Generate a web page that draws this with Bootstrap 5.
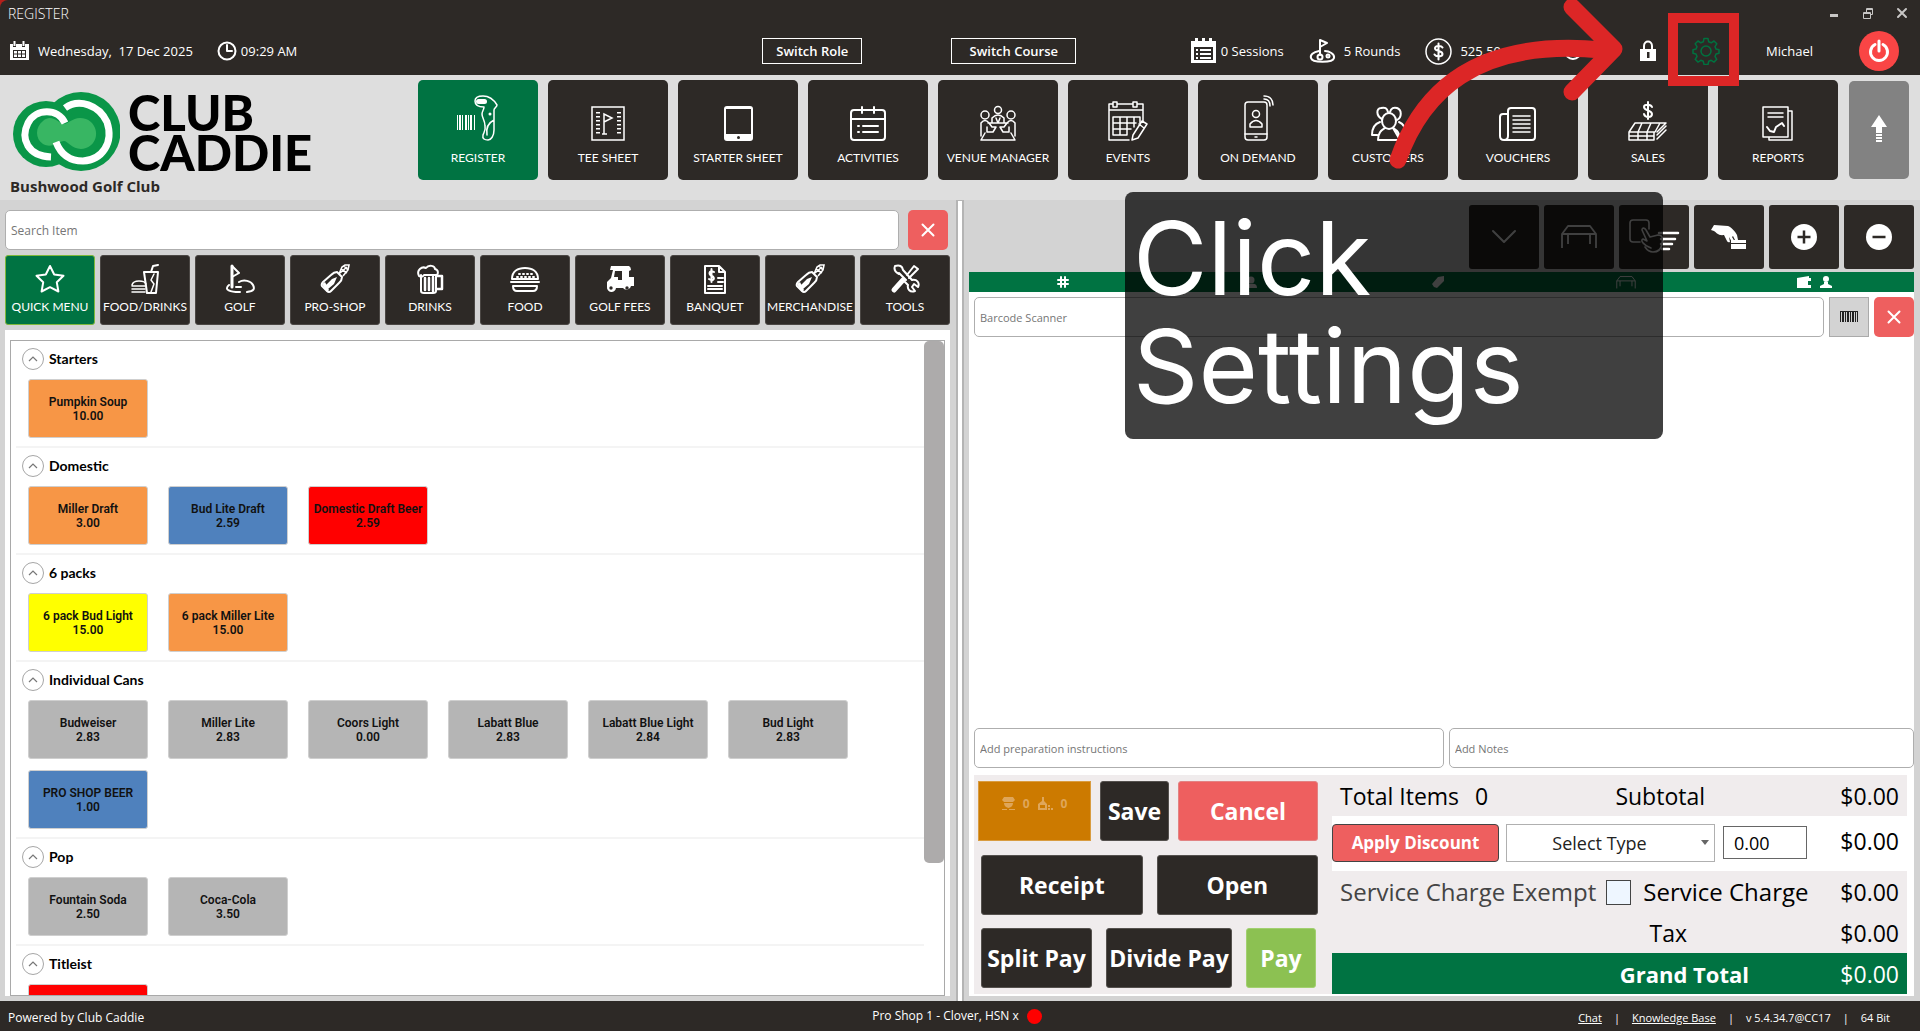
<!DOCTYPE html>
<html lang="en">
<head>
<meta charset="utf-8">
<meta name="viewport" content="width=device-width, initial-scale=1">
<title>Register</title>
<link href="https://cdn.jsdelivr.net/npm/bootstrap@5.3.0/dist/css/bootstrap.min.css" rel="stylesheet">
<style>
:root{--ink:#2d2926;--green:#007342;--coral:#ee5f5f;--ui:"Open Sans","Noto Sans",sans-serif;--cap:Lato,"Open Sans",sans-serif}
body{font-family:var(--ui);font-size:14px;line-height:20px;color:#000;background:#b3201c}
button{white-space:nowrap}
svg{display:block;flex:none}
.ln{fill:none;stroke:currentColor;stroke-width:2;stroke-linecap:round;stroke-linejoin:round}
.thin{stroke-width:1.5}
.topbar{background:var(--ink);color:#fff;height:75px;border-top-left-radius:8px}
.title-row{height:27px;padding:4px 12px 0 8px}
.info-row{height:48px;padding:0 21px 0 9px;font-size:13px}
.app-title{font-weight:300;line-height:20px}
.win-btns{gap:22px;color:#c8c6c5}
.plain{background:none;border:0;padding:0;color:inherit;line-height:20px}
.switches{gap:89px;margin-left:465px}
.switches button{width:100px;height:26px;border:1px solid #fff;background:none;color:#fff;font-weight:600;padding:0}
.switches .wide{width:125px}
.stats{gap:25px}
.user-tools{gap:35px;margin-left:56px}
.who{margin:0 46px}
.busy{margin-left:62px}
.power{width:40px;height:40px;border-radius:50%;background:#f94545;color:#fff}
.head{background:#dedede;height:125px;padding:5px 11px 0 10px}
.brand-words{font:900 49px/40px var(--cap);color:#000}
.club{font-weight:700;font-size:15px;color:var(--ink)}
.nav-tiles{gap:10px;width:1420px}
.nav-tile{flex:1 1 0;height:100px;background:var(--ink);color:#fff;border:0;border-radius:5px;padding:0 0 13px;font:400 12px/18px var(--cap)}
.nav-tile svg{margin-bottom:8px}
.tile-on{background:var(--green)}
.up-tile{flex:0 0 60px;height:98px;background:#828282;margin:1px 0 0 11px;padding-bottom:0}
.work{background:#d3d3d3;min-height:0}
.pane{flex:1 1 0;min-width:0}
.pane-left{padding:10px 6px 5px 5px}
.pane-right{padding:5px 6px 5px 5px}
.split-bar{width:8px;background:#fff;border:solid #b4b4b4;border-width:1px 2px 0}
.field{height:40px;border:1px solid #aeaeae;border-radius:5px;font-size:12px;padding:0 5px;background:#fff;min-width:0}
.field::placeholder{color:#767676;opacity:1}
.field-sm{font-size:11px}
.w-prep{flex:470 1 0}.w-notes{flex:465 1 0}
.sq{width:40px;height:40px;border:0;border-radius:5px;background:var(--coral);color:#fff;flex:none}
.scan{background:#d3d3d3;border:1px solid #aaa;border-radius:0;color:#222}
.find-row{gap:9px;padding-right:2px}
.cats{gap:5px;margin:5px 0}
.cat{flex:1 1 0;min-width:0;height:70px;background:var(--ink);color:#fff;border:1px solid #4b4744;border-radius:3px;padding:0 0 1px;font:400 12px/18px var(--cap)}
.cat svg{margin-bottom:4px}
.cat-on{background:var(--green);border-color:#7fb83a}
.list-wrap{background:#fff;padding:10px 5px 0;min-height:0}
.list-box{border:1px solid #a9a9a9;overflow:hidden}
.sect{padding:7px 0 8px 2px;border-bottom:2px solid #f4f4f4}
.sect-scroll{padding-left:5px}
.sect h2{font:700 14px/22px var(--cap);margin:0}
.fold{width:22px;height:22px;border:1px solid #a6a6a6;border-radius:50%;background:#fff;color:#777;margin-left:4px;margin-right:5px}
.items{gap:11px 20px;padding:9px 0 0 10px}
.item{width:120px;height:59px;border:1px solid #cfcfcf;border-radius:3px;font:600 12px/14px Roboto,sans-serif;color:#111;padding:0}
.c-or{background:#f79646}.c-bl{background:#4f81bd}.c-rd{background:#f00}.c-ye{background:#ff0}.c-gr{background:#b5b5b5}
.thumb{width:20px;height:522px;background:#adabab;border-radius:5px}
.tools{gap:5px;height:64px}
.tool{width:70px;background:var(--ink);border:0;border-radius:3px;color:#fff;padding:0}
.cols{background:var(--green);height:20px;color:#fff;margin-top:3px;padding-right:6px}
.entry{gap:5px;padding-left:5px}
.scan-row{margin-top:5px}
.order{background:#f0eced;margin:7px 7px 2px 5px}
.keys{flex:0 0 358px;padding:6px 14px 6px 7px}
.keys button{height:60px;border:1px solid #55514e;border-radius:3px;background:var(--ink);color:#fff;font-weight:700;font-size:23px;padding:0}
.keys .k-orange{flex:0 0 113px;margin-left:-3px;background:#cc7a00;border-color:#d99c40;border-radius:0;color:#dfa65a;font-size:12px;padding-bottom:14px}
.keys .k-coral{background:var(--coral);border-color:#e28383}
.keys .k-lime{background:#8cc152;border-color:#a2d070}
.k-w69{flex:0 0 69px}.k-w111{flex:0 0 111px}.k-w126{flex:0 0 126px}.k-w70{flex:0 0 70px}
.g9{gap:9px}.g14{gap:14px}
.sums{font-size:23px;line-height:40px;white-space:nowrap;min-width:0}
.sums .r1{height:41px}.sums .r2{height:55px;background:#fff;padding-bottom:2px}.sums .r3{height:42px}.sums .r4{height:40px}.sums .r5{height:41px;background:var(--green);color:#fff}
.svc{font-size:24px}
.svc-note{color:#444}
.amt{width:90px;text-align:right;padding-right:8px}
.lab-sub{margin-right:112px}.lab-tax{margin-right:130px}.lab-grand{margin-right:68px;font-size:22px}
.disc{width:167px;height:38px;background:var(--coral);color:#fff;font-weight:700;font-size:17px;line-height:30px;border:1px solid #444;border-radius:4px;padding:0}
.type-wrap{width:209px;margin:0 8px 0 7px}
.type-wrap select{display:block;appearance:none;width:100%;height:38px;border:1px solid #b0b0b0;background:#fff;font-size:18px;line-height:30px;text-align:center;text-align-last:center;padding:0 22px 0 0;color:#222}
.type-wrap svg{right:6px;top:16px}
.val{width:84px;height:33px;border:1px solid #666;font-size:18px;padding:0 0 0 10px}
.exempt{width:25px;height:25px;margin:0 12px 0 10px;appearance:none;background:#eef6ff;border:1px solid #444}
.foot{background:var(--ink);color:#fff;height:30px;font-size:12px;padding:0 30px 0 8px}
.foot a{color:#fff}
.foot-side{padding-top:3px}
.foot-mid{gap:8px;padding-left:16px}
.foot-links{gap:12px;font-size:11px}
.foot .dot{width:15px;height:15px;border-radius:50%;background:#f00}
.note{left:1125px;top:192px;width:538px;height:247px;border-radius:8px;background:rgba(0,0,0,.75);color:#fff;font:400 102px/108px Inter,sans-serif;padding:12px 10px 0 8px}
.pointer{left:1360px;top:0;pointer-events:none}
</style>
<script src="https://cdn.jsdelivr.net/npm/bootstrap@5.3.0/dist/js/bootstrap.bundle.min.js"></script>
</head>
<body>
<svg class="d-none" aria-hidden="true">
<symbol id="bottle" viewBox="0 0 30 30"><path fill="none" stroke="currentColor" stroke-width="2" stroke-linejoin="round" d="M17 8l5 5c0 4-2 5-4 7l-7 7q-2 2-4 0l-5-5q-1-2 1-4l8-7c2-2 3-3 6-3z"/><path fill="currentColor" d="M12 15l5-2-3 7-6 5-3-3zM2 20l3-2 4 8-2 2z"/><path fill="none" stroke="currentColor" stroke-width="1.6" d="M19 10l3-7 3-2 4 0-1 5-5 6M21 5l6 4M24 2l4 4M20 9l7-6"/></symbol>
<symbol id="x" viewBox="0 0 14 14"><path fill="none" stroke="currentColor" stroke-width="2" stroke-linecap="round" d="M1.500 1.500l11 11m0-11l-11 11"/></symbol>
<symbol id="up" viewBox="0 0 10 6"><path fill="none" stroke="currentColor" stroke-width="1.200" d="M1 5l4-4 4 4"/></symbol>
<symbol id="tbl" viewBox="0 0 36 24"><path fill="none" stroke="currentColor" stroke-width="1.800" stroke-linejoin="round" d="M7 1h22l6 8H1zM1 9v14M35 9v14M7 9v10M29 9v10M1 6"/></symbol>
</svg>
<div class="vh-100 d-flex flex-column overflow-hidden position-relative">
<header class="topbar flex-shrink-0">
 <div class="title-row d-flex justify-content-between align-items-start">
  <span class="app-title">REGISTER</span>
  <div class="win-btns d-flex">
   <button class="plain" aria-label="Minimize"><svg width="12" height="18"><path fill="currentColor" d="M2 10h8v3H2z"/></svg></button>
   <button class="plain" aria-label="Restore"><svg width="12" height="18" fill="none" stroke="currentColor"><path d="M1.500 8.500h7v6h-7zM1.500 9.500h7M4.500 8V4.500h6v6H9M4.500 5.500h6"/></svg></button>
   <button class="plain" aria-label="Close"><svg width="12" height="18" class="ln"><path d="M2 5l8 8m0-8l-8 8"/></svg></button>
  </div>
 </div>
 <div class="info-row d-flex align-items-center">
  <svg width="21" height="20"><path fill="currentColor" d="M1 3h3v3h3V3h6v3h3V3h4v16H1z"/><path stroke="currentColor" stroke-width="2" d="M5.500 0v5M14.500 0v5"/><path fill="#2d2926" d="M4 9h13v8H4z"/><path fill="currentColor" d="M5 10h3v2.500H5zM9 10h3v2.500H9zM13 10h3v2.500h-3zM5 13.500h3V16H5zM9 13.500h3V16H9zM13 13.500h3V16h-3z"/></svg>
  <span class="ms-2">Wednesday,&nbsp; 17 Dec 2025</span>
  <svg width="20" height="20" class="ln ms-4 me-1"><circle cx="10" cy="10" r="8.500"/><path d="M10 4v6h5"/></svg>
  <span>09:29 AM</span>
  <div class="switches d-flex"><button>Switch Role</button><button class="wide">Switch Course</button></div>
  <div class="stats d-flex align-items-center ms-auto">
   <span class="d-flex align-items-center"><svg width="27" height="26" class="me-1"><path fill="currentColor" d="M1 3h4V0h3v3h4V0h3v3h4V0h3v3h4v22H1z"/><path fill="#2d2926" d="M4 9h19v13H4z"/><path stroke="currentColor" stroke-width="2" d="M6 12h2M10 12h11M6 16h2M10 16h11M6 20h2M10 20h11"/></svg>0 Sessions</span>
   <span class="d-flex align-items-center"><svg width="27" height="26" class="ln me-2"><path d="M11 17V2l7 3-7 4"/><path d="M10 13C4 14 1 17 2 20c1 5 22 5 23 0 1-4-5-7-9-7"/><circle cx="11" cy="19" r="2.500"/><circle cx="19" cy="18" r="1.500"/></svg>5 Rounds</span>
   <span class="d-flex align-items-center"><svg width="27" height="27" class="ln thin me-2"><circle cx="13.500" cy="13.500" r="12.500"/><path stroke-width="2" d="M17.500 9.500c-1-2-7.500-2.500-7.500.8 0 3.500 7.500 2 7.500 5.700 0 3-6.500 3.300-8 .5M13.500 5.500v16"/></svg>525.50</span>
  </div>
  <svg width="20" height="20" class="ln busy"><circle cx="10" cy="10" r="8"/></svg>
  <div class="user-tools d-flex align-items-center">
   <button class="plain" aria-label="Lock"><svg width="18" height="22"><path class="ln" d="M5 10V6c0-6 8-6 8 0v4" stroke-width="3"/><path fill="currentColor" d="M1 9h16v12H1z"/><path fill="#2d2926" d="M8 12h2.500v6H8z"/></svg></button>
   <button class="plain" aria-label="Settings"><svg width="28" height="28" viewBox="0 0 28 28" fill="none" stroke="#00713f" stroke-width="1.500" stroke-linejoin="round"><circle cx="14" cy="14" r="5"/><path d="M12 1.500h4l.7 3.300 2.500 1 2.800-1.800 2.800 2.800-1.800 2.800 1 2.500 3 .6v3.600l-3 .7-1 2.500 1.800 2.800-2.800 2.800-2.800-1.800-2.500 1-.7 3.200h-4l-.7-3.200-2.500-1L6 25.100l-2.800-2.800L5 19.500 4 17l-3-.7v-3.600l3-.6 1-2.500-1.800-2.800L6 4l2.800 1.800 2.500-1z"/></svg></button>
  </div>
  <span class="who">Michael</span>
  <button class="power border-0 p-0 d-flex align-items-center justify-content-center" aria-label="Log out"><svg width="22" height="24" fill="none" stroke="currentColor" stroke-width="3" stroke-linecap="round"><path d="M7 5.500a8.500 8.500 0 1 0 8 0M11 2v10"/></svg></button>
 </div>
</header>
<section class="head d-flex justify-content-between flex-shrink-0">
 <div>
  <div class="d-flex align-items-center pt-2">
   <svg width="110" height="88" viewBox="10 87 110 88"><g fill="#0a9648"><circle cx="81" cy="130.500" r="39.500"/><circle cx="46" cy="133" r="33"/></g><path d="M43 120c9-8 16 3 21 3s10-9 22-5c13 5 14 24 0 29-12 4-18-7-22-7-5 0-12 8-21 3-8-5-8-17 0-23z" fill="#38b663"/><path d="M65 122c-7-15-29-15-37 0-8 16 0 33 23 34" fill="none" stroke="#fff" stroke-width="7"/><path d="M65 107c14-10 34-3 42 14 7 21-5 38-24 39-13 0-22-6-27-19" fill="none" stroke="#fff" stroke-width="7"/></svg>
   <div class="brand-words ms-2">CLUB<br>CADDIE</div>
  </div>
  <div class="club">Bushwood Golf Club</div>
 </div>
 <nav class="d-flex">
  <div class="nav-tiles d-flex">
  <button class="nav-tile tile-on d-flex flex-column align-items-center justify-content-end"><svg width="46" height="46"><path fill="currentColor" d="M2 20h1v15H2zM4 20h2v15H4zM7 20h1v15H7zM10 20h2v15h-2zM13 20h1v15h-1zM15 20h2v15h-2zM19 20h1v15h-1z"/><rect x="21" y="4" width="11" height="5" rx="2.500" fill="currentColor"/><path class="ln thin" d="M20 6c0-4 4-5 8-5 6 0 11 4 14 9 0 2-3 3-3 5v20c0 6-3 10-6 10s-6-1-5-5c1-3 3-5 2-9 0-6-3-8-3-12 0-3 2-4 2-7-4 0-9-1-9-6zM39 25c-6 3-8 9-7 15"/><circle cx="35" cy="19" r="1.500" fill="currentColor"/></svg>REGISTER</button>
  <button class="nav-tile d-flex flex-column align-items-center justify-content-end"><svg width="46" height="46" fill="none" stroke="currentColor" stroke-width="1.500"><path d="M7 12h32v33H7z"/><path stroke-dasharray="1.500 2.500" stroke-width="4" d="M13 17v24M34 17v24"/><path d="M19 39V19l8 4-8 4M17 39h5"/></svg>TEE SHEET</button>
  <button class="nav-tile d-flex flex-column align-items-center justify-content-end"><svg width="46" height="46"><rect x="9" y="11" width="29" height="35" rx="3" fill="currentColor"/><path fill="#2d2926" d="M11 14h25v25H11z"/><circle cx="23.500" cy="42.500" r="1.500" fill="#2d2926"/></svg>STARTER SHEET</button>
  <button class="nav-tile d-flex flex-column align-items-center justify-content-end"><svg width="46" height="46" class="ln"><rect x="6" y="15" width="34" height="30" rx="3"/><path d="M6 24h34M17 12v6M29 12v6M13 31h1M18 31h15M13 37h1M18 37h15"/></svg>ACTIVITIES</button>
  <button class="nav-tile d-flex flex-column align-items-center justify-content-end"><svg width="46" height="46" class="ln thin"><circle cx="23" cy="15" r="3.500"/><circle cx="10" cy="20" r="4"/><circle cx="36" cy="20" r="4"/><path d="M17 28v-5q6-6 12 0v5M21 23l2 5 2-5M13 28h20M6 41V28q4-5 8 0l3 4h4l-3 5h-6v-5M40 41V28q-4-5-8 0l-3 4h-4l3 5h6v-5M10 38l-4 7h34l-4-7"/></svg>VENUE MANAGER</button>
  <button class="nav-tile d-flex flex-column align-items-center justify-content-end"><svg width="46" height="46" class="ln thin"><path d="M24 45H4V9h4M12 9h16M33 9h5v18M4 15h34M8 7h4v5H8zM28 7h4v5h-4zM8 22h27v6M8 22v18h14M8 28h23M8 34h18M15 22v18M22 22v18M29 22v10"/><path d="M28 40l9-14 5 3-9 14-6 2zM34 29l5 4"/></svg>EVENTS</button>
  <button class="nav-tile d-flex flex-column align-items-center justify-content-end"><svg width="46" height="46" class="ln thin"><rect x="10" y="7" width="22" height="38" rx="3"/><path d="M10 39h22M20 42h2M29 4c4 0 6 3 6 7M29 1c6 0 9 4 9 9"/><circle cx="21" cy="19" r="3.500"/><path d="M15 32v-3q6-7 12 0v3z"/></svg>ON DEMAND</button>
  <button class="nav-tile d-flex flex-column align-items-center justify-content-end"><svg width="46" height="46" class="ln"><ellipse cx="24" cy="26" rx="7" ry="8"/><path d="M13 45c0-8 4-10 7-12M28 33c3 2 7 4 7 12zM17 24c-6-3-6-11-1-11 4-1 6 0 7 4M25 17c1-4 4-5 7-4 5 2 5 9 0 12M15 27c-6 2-8 6-8 13h5M34 27c5 2 7 6 7 13h-5M13 45h22"/></svg>CUSTOMERS</button>
  <button class="nav-tile d-flex flex-column align-items-center justify-content-end"><svg width="46" height="46" class="ln"><path d="M13 41V16q0-3 3-3h21q3 0 3 3v26q0 3-3 3H9q-4 0-4-4V22q0-3 3-3h5M13 41q0 4-4 4"/><path class="thin" d="M18 21h17M18 25h17M18 29h17M18 33h17M18 37h17"/></svg>VOUCHERS</button>
  <button class="nav-tile d-flex flex-column align-items-center justify-content-end"><svg width="46" height="46" class="ln thin"><path stroke-width="2" d="M27 12c-1-3-8-3-8 0 0 4 8 3 8 7 0 4-7 4-8 0M23 7v17"/><path d="M10 28h25l-5 9H4zM4 37v8h25v-8M4 41h25M35 28h6l-9 9M41 31l-9 9M41 35l-9 9M17 28l-4 9v8M26 28l-4 9v8"/></svg>SALES</button>
  <button class="nav-tile d-flex flex-column align-items-center justify-content-end"><svg width="46" height="46" class="ln thin"><path d="M8 12h25v30H8zM34 16h3v29H14v-3M13 18h15M13 22h15"/><path stroke-width="2" d="M12 32l3 4 4 1 2-5 6-4 2 3"/></svg>REPORTS</button>
  </div>
  <button class="nav-tile up-tile d-flex align-items-center justify-content-center" aria-label="Scroll up"><svg width="18" height="30" class="mb-0"><path fill="currentColor" d="M9 0l8 12h-5v6H6v-6H1zM6 19h6v2H6zM6 22h6v2H6zM6 25h6v2H6z"/></svg></button>
 </nav>
</section>
<main class="work d-flex flex-grow-1">
 <section class="pane pane-left d-flex flex-column">
  <div class="find-row d-flex"><input class="field flex-grow-1" placeholder="Search Item" aria-label="Search Item"><button class="sq d-flex align-items-center justify-content-center" aria-label="Clear search"><svg width="14" height="14"><use href="#x"/></svg></button></div>
  <div class="cats d-flex">
   <button class="cat cat-on d-flex flex-column align-items-center justify-content-center"><svg width="30" height="30" class="ln"><path d="M15 2l4.200 8.500 9.300 1.300-6.700 6.500 1.600 9.200L15 23.200l-8.400 4.300 1.600-9.200-6.700-6.500 9.300-1.300z"/></svg>QUICK MENU</button>
   <button class="cat d-flex flex-column align-items-center justify-content-center"><svg width="30" height="30" class="ln thin"><path stroke-width="2" d="M14 8h14l-2 21h-9zM21 8l2-6 5-1"/><path d="M24 10l-3 6 3 4-3 8M2 21q1-4 7-4t7 3M2 22h13M2 25h13M2 28h13"/></svg>FOOD/DRINKS</button>
   <button class="cat d-flex flex-column align-items-center justify-content-center"><svg width="30" height="30" class="ln"><path stroke-width="3" d="M7 23V2"/><path d="M7 2l7 7-7 4M4 21c-6 5 2 7 10 7M14 18c5-3 12-1 14 3 2 4 1 6-6 7M11 23h5M12 28h3"/></svg>GOLF</button>
   <button class="cat d-flex flex-column align-items-center justify-content-center"><svg width="30" height="30"><use href="#bottle"/></svg>PRO-SHOP</button>
   <button class="cat d-flex flex-column align-items-center justify-content-center"><svg width="30" height="30" class="ln"><path d="M6 11v16q0 2 3 2h9q3 0 3-2V11"/><path d="M4 12C1 6 7 2 11 4c3-4 9-2 9 1 4 1 3 5 2 6H9q-2 3-5 1z"/><path stroke-width="2.500" d="M10 14v12M14 14v12M18 13v14M22 12h5v13h-5"/></svg>DRINKS</button>
   <button class="cat d-flex flex-column align-items-center justify-content-center"><svg width="30" height="30" class="ln"><path d="M2 15C2 7 8 4 15 4s13 3 13 11zM1 18h28M3 22h24q0 5-4 5H7q-4 0-4-5z"/><path stroke-dasharray="1 3" d="M9 10h14M7 13h17"/></svg>FOOD</button>
   <button class="cat d-flex flex-column align-items-center justify-content-center"><svg width="30" height="30"><path fill="currentColor" d="M6 2h18q2 1 2 4l-2 1v6h5v9h-3a4.500 4.500 0 0 1-8 2h-7a4.500 4.500 0 0 1-9-1v-5l4-4 2-8H5zm4 5l-1 6h4v3h4V7z"/><circle cx="6" cy="24" r="1.700" fill="#2d2926"/><circle cx="22" cy="24" r="1.700" fill="#2d2926"/></svg>GOLF FEES</button>
   <button class="cat d-flex flex-column align-items-center justify-content-center"><svg width="30" height="30" class="ln"><path d="M5 2h14l6 6v21H5zM19 2v6h6M18 14h5M18 18h5M8 22h14M8 25h14"/><path d="M14 8c-5-3-6 3-2 4 4 2 1 6-3 3M11.500 5v13"/></svg>BANQUET</button>
   <button class="cat d-flex flex-column align-items-center justify-content-center"><svg width="30" height="30"><use href="#bottle"/></svg>MERCHANDISE</button>
   <button class="cat d-flex flex-column align-items-center justify-content-center"><svg width="30" height="30" class="ln"><path d="M9 9l7 7M17 11l7-9 4 3-9 9M9 10q-6-3-4-8 7-2 8 4l9 10c5-1 8 3 6 7l-4-3-2 3 3 4c-5 2-8-2-7-6l-5-5"/><path stroke-width="5" d="M13 16L4 26"/></svg>TOOLS</button>
  </div>
  <div class="list-wrap flex-grow-1 d-flex">
   <div class="list-box flex-grow-1 d-flex">
    <div class="sect-scroll flex-grow-1">
     <section class="sect"><div class="d-flex"><button class="fold p-0 d-flex align-items-center justify-content-center" aria-label="Collapse"><svg width="10" height="6"><use href="#up"/></svg></button><h2>Starters</h2></div>
      <div class="items d-flex flex-wrap"><button class="item c-or">Pumpkin Soup<br>10.00</button></div></section>
     <section class="sect"><div class="d-flex"><button class="fold p-0 d-flex align-items-center justify-content-center" aria-label="Collapse"><svg width="10" height="6"><use href="#up"/></svg></button><h2>Domestic</h2></div>
      <div class="items d-flex flex-wrap"><button class="item c-or">Miller Draft<br>3.00</button><button class="item c-bl">Bud Lite Draft<br>2.59</button><button class="item c-rd">Domestic Draft Beer<br>2.59</button></div></section>
     <section class="sect"><div class="d-flex"><button class="fold p-0 d-flex align-items-center justify-content-center" aria-label="Collapse"><svg width="10" height="6"><use href="#up"/></svg></button><h2>6 packs</h2></div>
      <div class="items d-flex flex-wrap"><button class="item c-ye">6 pack Bud Light<br>15.00</button><button class="item c-or">6 pack Miller Lite<br>15.00</button></div></section>
     <section class="sect"><div class="d-flex"><button class="fold p-0 d-flex align-items-center justify-content-center" aria-label="Collapse"><svg width="10" height="6"><use href="#up"/></svg></button><h2>Individual Cans</h2></div>
      <div class="items d-flex flex-wrap"><button class="item c-gr">Budweiser<br>2.83</button><button class="item c-gr">Miller Lite<br>2.83</button><button class="item c-gr">Coors Light<br>0.00</button><button class="item c-gr">Labatt Blue<br>2.83</button><button class="item c-gr">Labatt Blue Light<br>2.84</button><button class="item c-gr">Bud Light<br>2.83</button><button class="item c-bl">PRO SHOP BEER<br>1.00</button></div></section>
     <section class="sect"><div class="d-flex"><button class="fold p-0 d-flex align-items-center justify-content-center" aria-label="Collapse"><svg width="10" height="6"><use href="#up"/></svg></button><h2>Pop</h2></div>
      <div class="items d-flex flex-wrap"><button class="item c-gr">Fountain Soda<br>2.50</button><button class="item c-gr">Coca-Cola<br>3.50</button></div></section>
     <section class="sect"><div class="d-flex"><button class="fold p-0 d-flex align-items-center justify-content-center" aria-label="Collapse"><svg width="10" height="6"><use href="#up"/></svg></button><h2>Titleist</h2></div>
      <div class="items d-flex flex-wrap"><button class="item c-rd" aria-label="Titleist item"></button></div></section>
    </div>
    <div class="thumb flex-shrink-0"></div>
   </div>
  </div>
 </section>
 <div class="split-bar flex-shrink-0"></div>
 <section class="pane pane-right d-flex flex-column">
  <div class="tools d-flex justify-content-end flex-shrink-0">
   <button class="tool d-flex align-items-center justify-content-center" aria-label="Expand"><svg width="26" height="16" class="ln"><path d="M2 2l11 11L24 2"/></svg></button>
   <button class="tool d-flex align-items-center justify-content-center" aria-label="Tables"><svg width="36" height="24"><use href="#tbl"/></svg></button>
   <button class="tool d-flex align-items-center justify-content-center" aria-label="Select items"><svg width="54" height="38" class="ln"><path d="M13 24H6q-3 0-3-3V5q0-3 3-3h13q3 0 3 3v6M24 30c-8-3-11-8-8-9l4 2-5-11c0-3 3-2 4 0l4 7 8-2c5 0 5 4 4 9-1 6-5 8-9 8s-6-2-8-5" stroke-width="1.600"/><path d="M32 15h19M34 21h14M34 26h11M35 31h7" stroke-width="2.500"/></svg></button>
   <button class="tool d-flex align-items-center justify-content-center" aria-label="Card payment"><svg width="38" height="28"><path fill="currentColor" d="M4 2l14 1c3 1 7 5 9 9l1 5h-3l-2-4-1 1 3 5q-1 2-3 0l-3-5 1 5q-2 1-3-1l-3-6C8 13 6 9 4 8L1 7z"/><path fill="currentColor" d="M21 17h15v3H21zM21 21h15v5H21z"/></svg></button>
   <button class="tool d-flex align-items-center justify-content-center" aria-label="Add"><svg width="26" height="26"><circle cx="13" cy="13" r="13" fill="currentColor"/><path d="M6.500 13h13M13 6.500v13" stroke="#2d2926" stroke-width="2.500"/></svg></button>
   <button class="tool d-flex align-items-center justify-content-center" aria-label="Remove"><svg width="26" height="26"><circle cx="13" cy="13" r="13" fill="currentColor"/><path d="M6.500 13h13" stroke="#2d2926" stroke-width="2.500"/></svg></button>
  </div>
  <div class="cols row row-cols-5 g-0 align-items-center flex-shrink-0">
   <div class="d-flex justify-content-center"><svg width="12" height="12" class="ln"><path d="M4 1v10M8 1v10M1 4h10M1 8h10"/></svg></div>
   <div class="d-flex justify-content-center"><svg width="12" height="12" fill="currentColor"><circle cx="6" cy="4" r="3.500"/><path d="M0 12q0-5 6-4 6-1 6 4z"/></svg></div>
   <div class="d-flex justify-content-center"><svg width="12" height="12" fill="currentColor"><path d="M0 8l6-7 6-1v5l-7 7-3-1z"/></svg></div>
   <div class="d-flex justify-content-center"><svg width="20" height="13"><use href="#tbl"/></svg></div>
   <div class="d-flex justify-content-center gap-2"><svg width="15" height="12" fill="currentColor"><path d="M0 2l12-2v2h2v3h-3v4h3v3H0z"/></svg><svg width="12" height="12" fill="currentColor"><circle cx="6" cy="3" r="3"/><path d="M4 6h4v2l4 2v2H0v-2l4-2z"/></svg></div>
  </div>
  <div class="bg-white flex-grow-1 d-flex flex-column">
   <div class="entry scan-row d-flex"><input class="field field-sm flex-grow-1" placeholder="Barcode Scanner" aria-label="Barcode Scanner"><button class="sq scan d-flex align-items-center justify-content-center" aria-label="Scan"><svg width="18" height="12" fill="currentColor"><path d="M0 0h18v1H0zM0 0h1v11H0zM2 0h2v11H2zM5 0h1v11H5zM7 0h2v11H7zM10 0h1v11h-1zM12 0h2v11h-2zM15 0h1v11h-1zM17 0h1v11h-1z"/></svg></button><button class="sq d-flex align-items-center justify-content-center" aria-label="Clear barcode"><svg width="14" height="14"><use href="#x"/></svg></button></div>
   <div class="entry d-flex mt-auto"><input class="field field-sm w-prep" placeholder="Add preparation instructions" aria-label="Add preparation instructions"><input class="field field-sm w-notes" placeholder="Add Notes" aria-label="Add Notes"></div>
   <div class="order d-flex">
    <div class="keys d-flex flex-column justify-content-between">
     <div class="d-flex g9"><button class="k-orange d-flex align-items-center justify-content-center gap-2"><svg width="13" height="14" fill="currentColor"><path d="M2 0h9l2 3-2 2H2L0 3zM2 6h9q0 4-4.500 5Q2 10 2 6zM0 12h5v1H0zM7 12h6v1H7z"/></svg>0<svg width="15" height="14" fill="currentColor"><path fill-rule="evenodd" d="M4 0h2v4l3 3v6H0V7l4-3zM2 8v3h5V8zM10 8h2v2h-2zM10 11h2v2h-2zM13 11h2v2h-2z"/></svg>0</button><button class="k-w69">Save</button><button class="k-coral flex-grow-1">Cancel</button></div>
     <div class="d-flex g14"><button class="flex-fill w-50">Receipt</button><button class="flex-fill w-50">Open</button></div>
     <div class="d-flex g14"><button class="k-w111">Split Pay</button><button class="k-w126">Divide Pay</button><button class="k-lime k-w70">Pay</button></div>
    </div>
    <div class="sums flex-grow-1">
     <div class="r1 d-flex align-items-center ps-2"><span class="me-3">Total Items</span><span>0</span><span class="lab-sub ms-auto">Subtotal</span><span class="amt">$0.00</span></div>
     <div class="r2 d-flex align-items-center"><button class="disc">Apply Discount</button><div class="type-wrap position-relative"><select aria-label="Discount type"><option>Select Type</option></select><svg class="position-absolute" width="8" height="5"><path fill="#666" d="M0 0h8L4 5z"/></svg></div><input class="val" value="0.00" aria-label="Discount value"><span class="amt flex-grow-1 pb-1">$0.00</span></div>
     <div class="r3 d-flex align-items-center ps-2"><label for="exempt" class="svc svc-note">Service Charge Exempt</label><input type="checkbox" id="exempt" class="exempt flex-shrink-0"><span class="svc">Service Charge</span><span class="amt ms-auto">$0.00</span></div>
     <div class="r4 d-flex align-items-center"><span class="lab-tax ms-auto">Tax</span><span class="amt">$0.00</span></div>
     <div class="r5 d-flex align-items-center"><span class="lab-grand ms-auto fw-bold">Grand Total</span><span class="amt">$0.00</span></div>
    </div>
   </div>
  </div>
 </section>
</main>
<footer class="foot d-flex align-items-center flex-shrink-0">
 <span class="col foot-side">Powered by Club Caddie</span>
 <span class="foot-mid d-flex align-items-center">Pro Shop 1 - Clover, HSN x <span class="dot"></span></span>
 <span class="col foot-side foot-links d-flex justify-content-end"><a href="#">Chat</a><span>|</span><a href="#">Knowledge Base</a><span>|</span><span>v 5.4.34.7@CC17</span><span>|</span><span>64 Bit</span></span>
</footer>
<svg class="pointer position-absolute" width="400" height="180" viewBox="1360 0 400 180" fill="none" stroke="#dc2626"><path stroke-width="17" stroke-linecap="round" stroke-linejoin="round" d="M1398 160C1421 94 1474 38 1602 50M1572 7L1614 49 1572 92"/><path stroke-width="10" d="M1673 18h61v63h-61z"/></svg>
<div class="note position-absolute">Click<br>Settings</div>
</div>
</body>
</html>
